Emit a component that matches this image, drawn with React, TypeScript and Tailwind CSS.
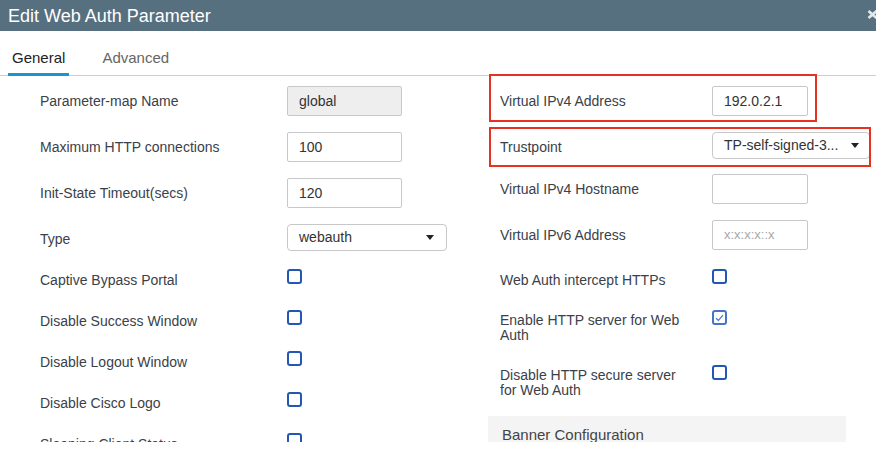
import React from "react";

const Arrow = () => (
  <svg width="8" height="5" viewBox="0 0 8 5" className="shrink-0">
    <path d="M0 0 L8 0 L4 5 Z" fill="#222" />
  </svg>
);

const Box = ({ checked = false }: { checked?: boolean }) => (
  <div
    className={
      "w-[15px] h-[15px] rounded-[3px] border-2 bg-white shrink-0 flex items-center justify-center " +
      (checked ? "border-[#4576c4]" : "border-[#2456b4]")
    }
  >
    {checked && (
      <svg width="9" height="8" viewBox="0 0 9 8">
        <path d="M1 4.2 L3.4 6.5 L8 1.2" fill="none" stroke="#4576c4" strokeWidth="1.2" />
      </svg>
    )}
  </div>
);

const Input = ({ value, w, gray = false, placeholder = false }: { value: string; w: string; gray?: boolean; placeholder?: boolean }) => (
  <div
    className={
      "h-[30px] border border-[#c8c8c8] rounded-[2px] flex items-center pl-[11px] shrink-0 " +
      w +
      (gray ? " bg-[#eeeeee]" : " bg-white")
    }
  >
    <span className={placeholder ? "text-[13px] text-[#a8a8a8]" : "text-[14px] text-[#333]"}>{value}</span>
  </div>
);

const Select = ({ value, w, pr }: { value: string; w: string; pr: string }) => (
  <div className={"h-[27px] self-start shrink-0 border border-[#c8c8c8] rounded-[4px] bg-white flex items-center justify-between pl-[11px] " + w + " " + pr}>
    <span className="text-[14px] text-[#333] whitespace-nowrap">{value}</span>
    <Arrow />
  </div>
);

const LLabel = ({ children }: { children: React.ReactNode }) => (
  <div className="w-[287px] pl-[40px] text-[14px] leading-[20px] text-[#3a4149] shrink-0 whitespace-nowrap">{children}</div>
);
const RLabel = ({ children }: { children: React.ReactNode }) => (
  <div className="w-[224px] pl-[12px] text-[14px] leading-[20px] text-[#3a4149] shrink-0 whitespace-nowrap">{children}</div>
);

export default function App() {
  return (
    <div className="w-[876px] h-[458px] bg-white overflow-hidden font-['Liberation_Sans',Arial,sans-serif]">
      <div className="h-[442px] overflow-hidden">
        {/* Header */}
        <div className="h-[31px] bg-[#56707f] flex items-center justify-between pl-[8px] overflow-hidden">
          <span className="text-[18px] text-white leading-[22px]">Edit Web Auth Parameter</span>
          <svg width="11" height="9" viewBox="0 0 11 9" className="mr-[-2px] mt-[-3px] shrink-0">
            <path d="M1.5 1 L9.5 8 M9.5 1 L1.5 8" stroke="#e4e9ec" strokeWidth="2.6" />
          </svg>
        </div>
        {/* Tabs */}
        <div className="h-[45px] border-b border-[#cfcfcf] flex items-start pl-[8px]">
          <div className="pt-[18px] pb-[6px] px-[4px] leading-[18px] text-[15px] text-[#222] border-b-[3px] border-[#1a95d3]">
            General
          </div>
          <div className="pt-[18px] leading-[18px] text-[15px] text-[#666] ml-[33px]">Advanced</div>
        </div>
        {/* Body */}
        <div className="flex">
          {/* Left column */}
          <div className="w-[488px] pt-[10px] flex flex-col">
            <div className="h-[30px] flex items-center">
              <LLabel>Parameter-map Name</LLabel>
              <Input value="global" w="w-[115px]" gray />
            </div>
            <div className="h-[30px] mt-[16px] flex items-center">
              <LLabel>Maximum HTTP connections</LLabel>
              <Input value="100" w="w-[115px]" />
            </div>
            <div className="h-[30px] mt-[16px] flex items-center">
              <LLabel>Init-State Timeout(secs)</LLabel>
              <Input value="120" w="w-[115px]" />
            </div>
            <div className="h-[30px] mt-[16px] flex items-center">
              <LLabel>Type</LLabel>
              <Select value="webauth" w="w-[160px]" pr="pr-[12px]" />
            </div>
            <div className="mt-[15px]">
              {["Captive Bypass Portal", "Disable Success Window", "Disable Logout Window", "Disable Cisco Logo", "Sleeping Client Status"].map((t) => (
                <div key={t} className="h-[41px] flex items-start">
                  <div className="mt-[1px]">
                    <LLabel>{t}</LLabel>
                  </div>
                  <Box />
                </div>
              ))}
            </div>
          </div>
          {/* Right column */}
          <div className="flex-1 pt-[10px] flex flex-col relative">
            <div className="h-[30px] flex items-center">
              <RLabel>Virtual IPv4 Address</RLabel>
              <Input value="192.0.2.1" w="w-[96px]" />
            </div>
            <div className="h-[30px] mt-[16px] flex items-center">
              <RLabel>Trustpoint</RLabel>
              <Select value="TP-self-signed-3..." w="w-[158px]" pr="pr-[10px]" />
            </div>
            <div className="h-[30px] mt-[12px] flex items-center">
              <RLabel>Virtual IPv4 Hostname</RLabel>
              <Input value="" w="w-[96px]" />
            </div>
            <div className="h-[30px] mt-[16px] flex items-center">
              <RLabel>Virtual IPv6 Address</RLabel>
              <Input value="x:x:x:x::x" w="w-[96px]" placeholder />
            </div>
            <div className="h-[41px] mt-[19px] flex items-start">
              <div className="mt-[1px]">
                <RLabel>Web Auth intercept HTTPs</RLabel>
              </div>
              <Box />
            </div>
            <div className="h-[55px] flex items-start">
              <div className="w-[224px] pl-[12px] mt-[3px] text-[14px] leading-[15px] text-[#3a4149] shrink-0">
                Enable HTTP server for Web
                <br />
                Auth
              </div>
              <Box checked />
            </div>
            <div className="h-[51px] flex items-start">
              <div className="w-[224px] pl-[12px] mt-[3px] text-[14px] leading-[15px] text-[#3a4149] shrink-0">
                Disable HTTP secure server
                <br />
                for Web Auth
              </div>
              <Box />
            </div>
            <div className="w-[358px] h-[40px] bg-[#f4f4f4] pl-[14px] pt-[10px] text-[15px] leading-[18px] text-[#444]">
              Banner Configuration
            </div>
            {/* Red annotation boxes */}
            <div className="absolute left-[1px] top-[-2px] w-[328px] h-[48px] border-2 border-[#e53222] pointer-events-none" />
            <div className="absolute left-[1px] top-[51px] w-[382px] h-[40px] border-2 border-[#e53222] pointer-events-none" />
          </div>
        </div>
      </div>
    </div>
  );
}
